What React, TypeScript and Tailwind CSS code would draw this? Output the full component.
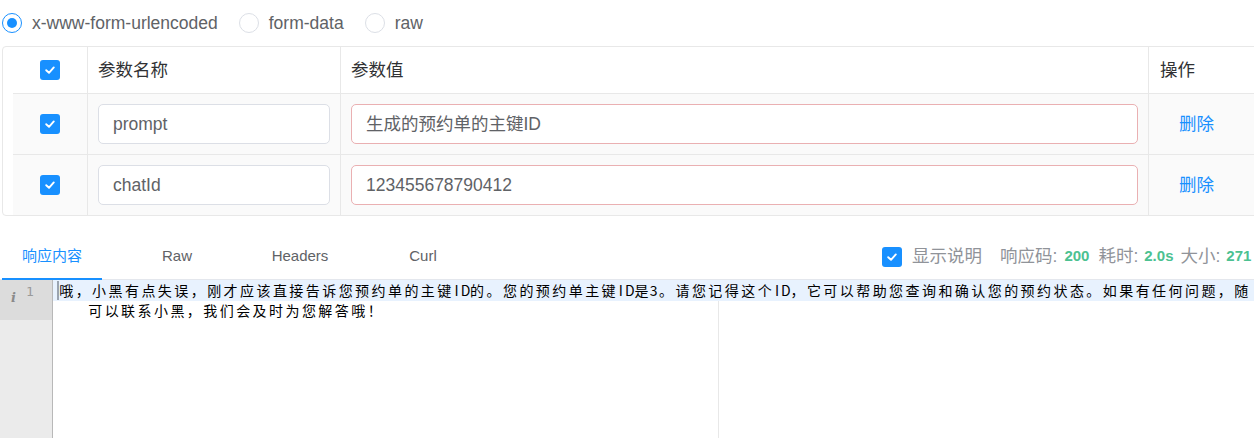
import React from "react";

const Check = () => (
  <span className="flex h-[20px] w-[20px] items-center justify-center rounded-[3px] bg-[#1890ff]">
    <svg width="12" height="12" viewBox="0 0 12 12" fill="none">
      <path d="M2.2 6.2 L5 8.8 L9.8 3.4" stroke="#fff" strokeWidth="1.9" strokeLinecap="round" strokeLinejoin="round" />
    </svg>
  </span>
);

const Radio = ({ on, label }: { on?: boolean; label: string }) => (
  <div className="flex items-center gap-[10px]">
    <span
      className={
        on
          ? "flex h-[20px] w-[20px] items-center justify-center rounded-full border border-[#1890ff] bg-white"
          : "flex h-[20px] w-[20px] items-center justify-center rounded-full border border-[#dcdfe6] bg-white"
      }
    >
      {on ? <span className="h-[10px] w-[10px] rounded-full bg-[#1890ff]" /> : null}
    </span>
    <span className="text-[17.5px] text-[#606266]">{label}</span>
  </div>
);

const Mono = ({ text }: { text: string }) => (
  <>
    {Array.from(text).map((ch, i) =>
      /[^\x00-\x7f]/.test(ch) ? (
        <span key={i} className="inline-block w-[16.45px] text-center">
          {ch}
        </span>
      ) : (
        <span key={i} className="inline-block w-[8.2px] text-center">
          {ch}
        </span>
      )
    )}
  </>
);

const rows = [
  { name: "prompt", value: "生成的预约单的主键ID" },
  { name: "chatId", value: "123455678790412" },
];

export default function App() {
  return (
    <div className="h-[438px] w-[1254px] overflow-hidden bg-white font-['Liberation_Sans','Noto_Sans_CJK_SC',sans-serif]">
      <div className="w-[1300px]">
        {/* radio row */}
        <div className="flex h-[46px] items-center gap-[21px] pl-[2px]">
          <Radio on label="x-www-form-urlencoded" />
          <Radio label="form-data" />
          <Radio label="raw" />
        </div>

        {/* table */}
        <div className="ml-[2px] w-[1266px] rounded-[4px] border border-[#e8e8e8] pl-[10px]">
          <div className="grid h-[47px] grid-cols-[75px_253px_808px_120px] border-b border-[#e8e8e8] bg-white text-[17.5px] text-[#303133]">
            <div className="flex items-center justify-center border-r border-[#e8e8e8]">
              <Check />
            </div>
            <div className="flex items-center border-r border-[#e8e8e8] pl-[10px]">参数名称</div>
            <div className="flex items-center border-r border-[#e8e8e8] pl-[10px]">参数值</div>
            <div className="flex items-center pl-[11px]">操作</div>
          </div>
          {rows.map((r, i) => (
            <div
              key={r.name}
              className={
                i === 0
                  ? "grid h-[61px] grid-cols-[75px_253px_808px_120px] border-b border-[#e8e8e8] bg-[#fafafa]"
                  : "grid h-[60px] grid-cols-[75px_253px_808px_120px] bg-[#fafafa]"
              }
            >
              <div className="flex items-center justify-center border-r border-[#e8e8e8]">
                <Check />
              </div>
              <div className="flex items-center border-r border-[#e8e8e8] px-[10px]">
                <div className="flex h-[40px] w-full items-center rounded-[5px] border border-[#dcdfe6] bg-white px-[14px] text-[17.5px] text-[#606266]">
                  {r.name}
                </div>
              </div>
              <div className="flex items-center border-r border-[#e8e8e8] px-[10px]">
                <div className="flex h-[40px] w-full items-center rounded-[5px] border border-[#eab0b2] bg-white px-[14px] text-[17.5px] text-[#606266]">
                  {r.value}
                </div>
              </div>
              <div className="flex items-center pl-[30px] text-[17.5px] text-[#1890ff]">删除</div>
            </div>
          ))}
        </div>

        {/* tabs */}
        <div className="flex items-start border-b border-[#e4e7ed] pt-[19px]">
          <div className="-mb-px ml-[2px] flex h-[45px] w-[100px] items-center justify-center border-b-2 border-[#1890ff] text-[15px] text-[#1890ff]">
            响应内容
          </div>
          <div className="flex h-[43px] w-[150px] items-center justify-center text-[15px] text-[#606266]">Raw</div>
          <div className="flex h-[43px] w-[96px] items-center justify-center text-[15px] text-[#606266]">Headers</div>
          <div className="flex h-[43px] w-[150px] items-center justify-center text-[15px] text-[#606266]">Curl</div>
          <div className="ml-[384px] flex h-[43px] items-center whitespace-nowrap text-[17.5px] text-[#909399]">
            <Check />
            <span className="ml-[10px]">显示说明</span>
            <span className="ml-[18px]">响应码:</span>
            <span className="ml-[7px] text-[15px] font-bold text-[#4cc191]">200</span>
            <span className="ml-[9px]">耗时:</span>
            <span className="ml-[6px] text-[15px] font-bold text-[#4cc191]">2.0s</span>
            <span className="ml-[7px]">大小:</span>
            <span className="ml-[6px] text-[15px] font-bold text-[#4cc191]">271</span>
          </div>
        </div>

        {/* editor */}
        <div className="flex h-[158px]">
          <div className="w-[53px] shrink-0 border-r border-[#b8b8b8] bg-[#ebebeb]">
            <div className="flex h-[40px] items-start bg-[#dcdcdc] pl-[11px] pt-[5px]">
              <span className="mt-[6px] font-['DejaVu_Serif',serif] text-[13px] font-bold italic leading-none text-[#8a8a8a]">
                i
              </span>
              <span className="ml-[10px] font-['DejaVu_Sans_Mono',monospace] text-[13px] leading-none text-[#9a9a9a]">
                1
              </span>
            </div>
          </div>
          <div className="relative flex-1 font-['Noto_Sans_CJK_SC',sans-serif] text-[14px] text-black">
            <div className="absolute bottom-0 left-[665px] top-0 w-px bg-[#e8e8e8]" />
            <div className="relative z-10 flex h-[21px] items-center whitespace-nowrap bg-[#e8f2fe] pl-[5px] leading-[21px]">
              <span className="absolute left-[4px] top-[1px] h-[19px] w-[2px] bg-[#9aa4b0]" />
              <Mono text="哦，小黑有点失误，刚才应该直接告诉您预约单的主键ID的。您的预约单主键ID是3。请您记得这个ID，它可以帮助您查询和确认您的预约状态。如果有任何问题，随" />
            </div>
            <div className="flex h-[19px] items-center whitespace-nowrap pl-[34px] leading-[19px]">
              <Mono text="可以联系小黑，我们会及时为您解答哦！" />
            </div>
          </div>
        </div>
      </div>
    </div>
  );
}
